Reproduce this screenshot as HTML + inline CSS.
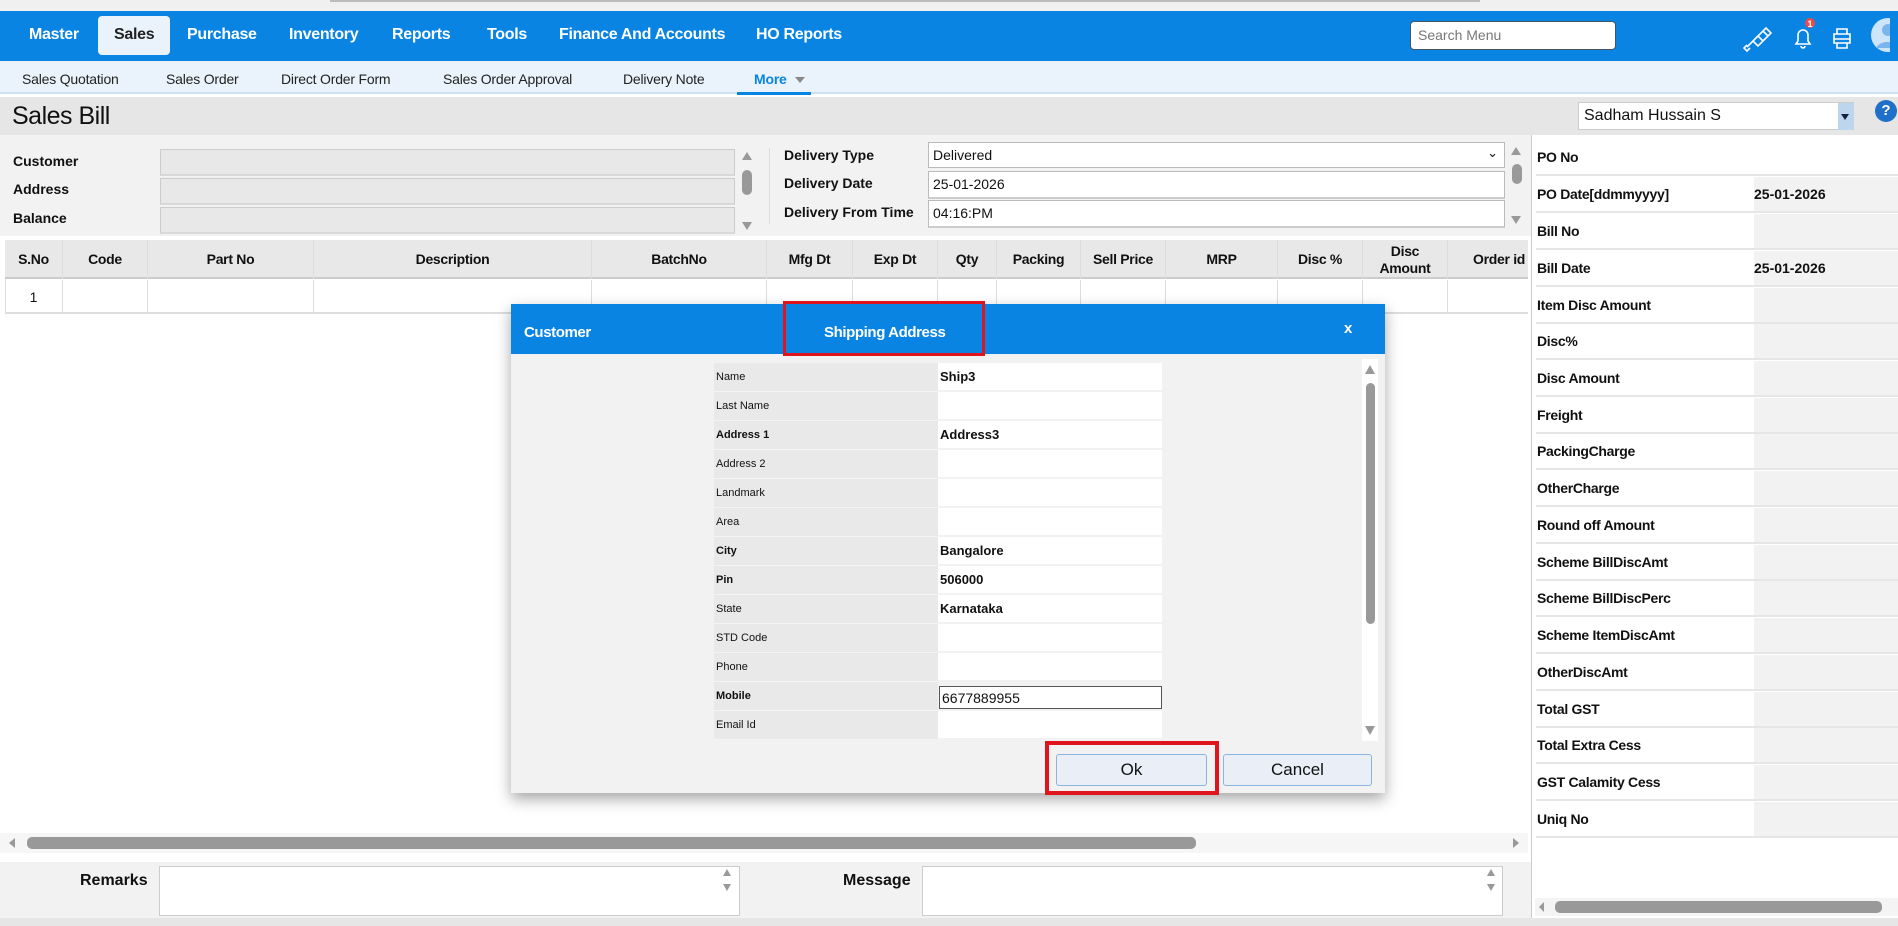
<!DOCTYPE html>
<html><head><meta charset="utf-8"><style>
*{box-sizing:border-box;margin:0;padding:0}
body{width:1898px;height:926px;position:relative;overflow:hidden;background:#fff;font-family:"Liberation Sans",sans-serif;color:#111}
.a{position:absolute}
.nav{font-weight:bold;font-size:16px;color:#fff;top:26px;letter-spacing:-0.3px}
.sub{font-size:14px;top:71px;color:#222;letter-spacing:-0.2px}
.lbl{font-weight:bold;font-size:14px}
.inp{background:#e8e8e8;border:1px solid #ccc;border-bottom:2px solid #d8d8d8}
.inw{background:#fff;border:1px solid #bbb;font-size:14px;padding:4px 4px}
.th{position:absolute;top:240px;height:39px;border-right:1px solid #ddd;font-weight:bold;font-size:14px;display:flex;align-items:center;justify-content:center;text-align:center;line-height:17px;letter-spacing:-0.3px}
.td{position:absolute;top:280px;height:34px;border-right:1px solid #ddd}
.rp{position:absolute;left:1536px;width:362px;height:36px;border-bottom:2px solid #e6e6e6;display:flex}
.rp .l{width:218px;background:#fff;font-weight:bold;font-size:14px;display:flex;align-items:center;padding-left:1px;letter-spacing:-0.3px}
.rp .v{flex:1;background:#f2f2f2;font-weight:bold;font-size:14px;display:flex;align-items:center;padding-left:0}
.dr{position:absolute;left:714px;width:448px;height:29px;display:flex}
.dr .l{width:224px;background:#e9e9e9;font-size:11px;display:flex;align-items:center;padding-left:2px;border-bottom:1px solid #f4f4f4}
.dr .v{flex:1;background:#fff;font-size:13px;font-weight:bold;display:flex;align-items:center;padding-left:2px;border-bottom:2px solid #f2f2f2}
.sb{background:#999;border-radius:5px}
.tri{width:0;height:0;border-left:5px solid transparent;border-right:5px solid transparent}
</style></head><body>
<div class="a" style="left:0;top:0;width:1898px;height:11px;background:#f0f0f0"></div>
<div class="a" style="left:330px;top:0;width:1150px;height:2px;background:#bbb"></div>
<div class="a" style="left:0;top:11px;width:1898px;height:50px;background:#0984e3"></div>
<div class="a" style="left:98px;top:16px;width:72px;height:39px;background:#eaf3fc;border-radius:4px"></div>
<div class="a nav" style="left:29px">Master</div>
<div class="a nav" style="left:114px;color:#222">Sales</div>
<div class="a nav" style="left:187px">Purchase</div>
<div class="a nav" style="left:289px">Inventory</div>
<div class="a nav" style="left:392px">Reports</div>
<div class="a nav" style="left:487px">Tools</div>
<div class="a nav" style="left:559px">Finance And Accounts</div>
<div class="a nav" style="left:756px">HO Reports</div>
<div class="a" style="left:1410px;top:21px;width:206px;height:29px;background:#fff;border:1px solid #456;border-radius:4px;font-size:14px;color:#777;padding:5px 7px">Search Menu</div>
<svg class="a" style="left:1740px;top:18px" width="150" height="36" viewBox="0 0 150 36">
<g fill="none" stroke="#fff" stroke-width="1.6"><path d="M7 29l6-6M10 30l-3 3-3-3 3-3M13 23l10-10 5 5-10 10zM23 13l3-3 5 5-3 3M18 18l5 5"/>
<path d="M56 26h14l-2-3v-6a5 5 0 0 0-10 0v6zM61 28a2 2 0 0 0 4 0"/>
<path d="M97 16v-5h10v5M94 16h16v9H94zM94 21h16M97 25v5h10v-5"/></g>
<circle cx="70" cy="5" r="5" fill="#ee4b4b"/><text x="70" y="9" font-size="9" fill="#fff" text-anchor="middle" font-family="Liberation Sans" font-weight="bold">1</text>
<circle cx="148" cy="17" r="17" fill="#cde5fa"/><circle cx="148" cy="12" r="6" fill="#7ab6ec"/><path d="M136 30a13 10 0 0 1 24 0z" fill="#7ab6ec"/>
</svg>
<div class="a" style="left:0;top:61px;width:1898px;height:33px;background:#eaf3fc;border-bottom:2px solid #cfe0f0"></div>
<div class="a sub" style="left:22px">Sales Quotation</div>
<div class="a sub" style="left:166px">Sales Order</div>
<div class="a sub" style="left:281px">Direct Order Form</div>
<div class="a sub" style="left:443px">Sales Order Approval</div>
<div class="a sub" style="left:623px">Delivery Note</div>
<div class="a sub" style="left:754px;color:#0984e3;font-weight:bold">More</div>
<div class="a tri" style="left:795px;top:77px;border-top:6px solid #888"></div>
<div class="a" style="left:737px;top:92px;width:74px;height:3px;background:#0984e3"></div>
<div class="a" style="left:0;top:97px;width:1898px;height:38px;background:#e6e6e6"></div>
<div class="a" style="left:12px;top:102px;font-size:25px;letter-spacing:-0.5px">Sales Bill</div>
<div class="a" style="left:1578px;top:102px;width:276px;height:28px;background:#fff;border:1px solid #ccc;font-size:16px;padding:4px 5px">Sadham Hussain S</div>
<div class="a" style="left:1838px;top:103px;width:16px;height:27px;background:#bcd6ee"></div>
<div class="a tri" style="left:1841px;top:114px;border-top:6px solid #124;border-left-width:4px;border-right-width:4px"></div>
<div class="a" style="left:1875px;top:100px;width:22px;height:22px;border-radius:50%;background:#1e70c8;color:#fff;font-weight:bold;font-size:15px;text-align:center;line-height:22px">?</div>
<div class="a" style="left:0;top:135px;width:1531px;height:101px;background:#f2f2f2"></div>
<div class="a lbl" style="left:13px;top:153px">Customer</div>
<div class="a lbl" style="left:13px;top:181px">Address</div>
<div class="a lbl" style="left:13px;top:210px">Balance</div>
<div class="a inp" style="left:160px;top:149px;width:575px;height:27px"></div>
<div class="a inp" style="left:160px;top:178px;width:575px;height:27px"></div>
<div class="a inp" style="left:160px;top:207px;width:575px;height:27px"></div>
<div class="a tri" style="left:742px;top:152px;border-bottom:8px solid #999"></div>
<div class="a sb" style="left:742px;top:170px;width:10px;height:25px"></div>
<div class="a tri" style="left:742px;top:222px;border-top:8px solid #999"></div>
<div class="a" style="left:769px;top:148px;width:1px;height:76px;background:#ddd"></div>
<div class="a lbl" style="left:784px;top:147px">Delivery Type</div>
<div class="a lbl" style="left:784px;top:175px">Delivery Date</div>
<div class="a lbl" style="left:784px;top:204px">Delivery From Time</div>
<div class="a inw" style="left:928px;top:142px;width:577px;height:26px">Delivered<span style="position:absolute;right:6px;top:2px;font-size:13px">&#8964;</span></div>
<div class="a inw" style="left:928px;top:171px;width:577px;height:28px;border-bottom:2px solid #ccc">25-01-2026</div>
<div class="a inw" style="left:928px;top:200px;width:577px;height:28px;border-bottom:2px solid #ccc">04:16:PM</div>
<div class="a tri" style="left:1511px;top:147px;border-bottom:8px solid #999"></div>
<div class="a sb" style="left:1512px;top:164px;width:10px;height:20px"></div>
<div class="a tri" style="left:1511px;top:216px;border-top:8px solid #999"></div>
<div class="a" style="left:5px;top:240px;width:1523px;height:39px;background:#e8e8e8;border-bottom:2px solid #ccc"></div>
<div class="th" style="left:5px;width:58px">S.No</div>
<div class="th" style="left:63px;width:85px">Code</div>
<div class="th" style="left:148px;width:166px">Part No</div>
<div class="th" style="left:314px;width:278px">Description</div>
<div class="th" style="left:592px;width:175px">BatchNo</div>
<div class="th" style="left:767px;width:86px">Mfg Dt</div>
<div class="th" style="left:853px;width:85px">Exp Dt</div>
<div class="th" style="left:938px;width:59px">Qty</div>
<div class="th" style="left:997px;width:84px">Packing</div>
<div class="th" style="left:1081px;width:85px">Sell Price</div>
<div class="th" style="left:1166px;width:112px">MRP</div>
<div class="th" style="left:1278px;width:85px">Disc %</div>
<div class="th" style="left:1363px;width:85px">Disc<br>Amount</div>
<div class="th" style="left:1448px;width:80px;justify-content:flex-start;padding-left:25px;border:0;overflow:hidden;white-space:nowrap">Order id</div>
<div class="a" style="left:5px;top:279px;width:1523px;height:35px;border-left:1px solid #ddd;border-bottom:2px solid #ddd"></div>
<div class="td" style="left:5px;width:58px;text-align:center;font-size:14px;line-height:34px">1</div>
<div class="td" style="left:63px;width:85px"></div><div class="td" style="left:148px;width:166px"></div><div class="td" style="left:314px;width:278px"></div><div class="td" style="left:592px;width:175px"></div><div class="td" style="left:767px;width:86px"></div><div class="td" style="left:853px;width:85px"></div><div class="td" style="left:938px;width:59px"></div><div class="td" style="left:997px;width:84px"></div><div class="td" style="left:1081px;width:85px"></div><div class="td" style="left:1166px;width:112px"></div><div class="td" style="left:1278px;width:85px"></div><div class="td" style="left:1363px;width:85px"></div>
<div class="a" style="left:1531px;top:135px;width:1px;height:791px;background:#ccc"></div>
<div class="rp" style="top:140px"><div class="l">PO No</div><div class="v" style="background:#fff"></div></div>
<div class="rp" style="top:177px"><div class="l">PO Date[ddmmyyyy]</div><div class="v">25-01-2026</div></div>
<div class="rp" style="top:214px"><div class="l">Bill No</div><div class="v"></div></div>
<div class="rp" style="top:251px"><div class="l">Bill Date</div><div class="v">25-01-2026</div></div>
<div class="rp" style="top:288px"><div class="l">Item Disc Amount</div><div class="v"></div></div>
<div class="rp" style="top:324px"><div class="l">Disc%</div><div class="v"></div></div>
<div class="rp" style="top:361px"><div class="l">Disc Amount</div><div class="v"></div></div>
<div class="rp" style="top:398px"><div class="l">Freight</div><div class="v"></div></div>
<div class="rp" style="top:434px"><div class="l">PackingCharge</div><div class="v"></div></div>
<div class="rp" style="top:471px"><div class="l">OtherCharge</div><div class="v"></div></div>
<div class="rp" style="top:508px"><div class="l">Round off Amount</div><div class="v"></div></div>
<div class="rp" style="top:545px"><div class="l">Scheme BillDiscAmt</div><div class="v"></div></div>
<div class="rp" style="top:581px"><div class="l">Scheme BillDiscPerc</div><div class="v"></div></div>
<div class="rp" style="top:618px"><div class="l">Scheme ItemDiscAmt</div><div class="v"></div></div>
<div class="rp" style="top:655px"><div class="l">OtherDiscAmt</div><div class="v"></div></div>
<div class="rp" style="top:692px"><div class="l">Total GST</div><div class="v"></div></div>
<div class="rp" style="top:728px"><div class="l">Total Extra Cess</div><div class="v"></div></div>
<div class="rp" style="top:765px"><div class="l">GST Calamity Cess</div><div class="v"></div></div>
<div class="rp" style="top:802px"><div class="l">Uniq No</div><div class="v"></div></div>
<div class="a" style="left:1535px;top:898px;width:363px;height:18px;background:#f4f4f4"></div>
<div class="a sb" style="left:1555px;top:901px;width:327px;height:12px"></div>
<div class="a" style="left:1539px;top:902px;width:0;height:0;border-top:5px solid transparent;border-bottom:5px solid transparent;border-right:5px solid #999"></div>
<div class="a" style="left:0;top:833px;width:1528px;height:20px;background:#f6f6f6"></div>
<div class="a sb" style="left:27px;top:837px;width:1169px;height:12px"></div>
<div class="a" style="left:9px;top:838px;width:0;height:0;border-top:5px solid transparent;border-bottom:5px solid transparent;border-right:6px solid #999"></div>
<div class="a" style="left:1513px;top:838px;width:0;height:0;border-top:5px solid transparent;border-bottom:5px solid transparent;border-left:6px solid #999"></div>
<div class="a" style="left:0;top:862px;width:1531px;height:56px;background:#f2f2f2"></div>
<div class="a lbl" style="left:80px;top:872px;font-size:16px">Remarks</div>
<div class="a" style="left:159px;top:866px;width:581px;height:50px;background:#fff;border:1px solid #ccc"></div>
<div class="a tri" style="left:723px;top:869px;border-bottom:7px solid #999;border-left-width:4px;border-right-width:4px"></div>
<div class="a tri" style="left:723px;top:884px;border-top:7px solid #999;border-left-width:4px;border-right-width:4px"></div>
<div class="a lbl" style="left:843px;top:872px;font-size:16px">Message</div>
<div class="a" style="left:922px;top:866px;width:581px;height:50px;background:#fff;border:1px solid #ccc"></div>
<div class="a tri" style="left:1487px;top:869px;border-bottom:7px solid #999;border-left-width:4px;border-right-width:4px"></div>
<div class="a tri" style="left:1487px;top:884px;border-top:7px solid #999;border-left-width:4px;border-right-width:4px"></div>
<div class="a" style="left:0;top:918px;width:1898px;height:8px;background:#e6e6e6"></div>
<div class="a" style="left:511px;top:304px;width:874px;height:489px;background:#f2f2f2;box-shadow:0 6px 14px rgba(0,0,0,.35)"></div>
<div class="a" style="left:511px;top:304px;width:874px;height:50px;background:#0984e3"></div>
<div class="a" style="left:524px;top:324px;color:#fff;font-weight:bold;font-size:15px;letter-spacing:-0.4px">Customer</div>
<div class="a" style="left:783px;top:301px;width:202px;height:55px;border:3px solid #e0141c"></div>
<div class="a" style="left:824px;top:324px;color:#fff;font-weight:bold;font-size:15px;letter-spacing:-0.4px">Shipping Address</div>
<div class="a" style="left:1344px;top:320px;color:#fff;font-weight:bold;font-size:15px">x</div>
<div class="dr" style="top:363px"><div class="l">Name</div><div class="v">Ship3</div></div>
<div class="dr" style="top:392px"><div class="l">Last Name</div><div class="v"></div></div>
<div class="dr" style="top:421px"><div class="l" style="font-weight:bold">Address 1</div><div class="v">Address3</div></div>
<div class="dr" style="top:450px"><div class="l">Address 2</div><div class="v"></div></div>
<div class="dr" style="top:479px"><div class="l">Landmark</div><div class="v"></div></div>
<div class="dr" style="top:508px"><div class="l">Area</div><div class="v"></div></div>
<div class="dr" style="top:537px"><div class="l" style="font-weight:bold">City</div><div class="v">Bangalore</div></div>
<div class="dr" style="top:566px"><div class="l" style="font-weight:bold">Pin</div><div class="v">506000</div></div>
<div class="dr" style="top:595px"><div class="l">State</div><div class="v">Karnataka</div></div>
<div class="dr" style="top:624px"><div class="l">STD Code</div><div class="v"></div></div>
<div class="dr" style="top:653px"><div class="l">Phone</div><div class="v"></div></div>
<div class="dr" style="top:682px"><div class="l" style="font-weight:bold">Mobile</div><div class="v" style="font-weight:normal;font-size:14px;border:1px solid #555;margin:4px 0 2px 1px">6677889955</div></div>
<div class="dr" style="top:711px"><div class="l">Email Id</div><div class="v"></div></div>
<div class="a" style="left:1362px;top:359px;width:16px;height:382px;background:#fff"></div>
<div class="a tri" style="left:1365px;top:365px;border-bottom:9px solid #999"></div>
<div class="a sb" style="left:1366px;top:383px;width:9px;height:241px"></div>
<div class="a tri" style="left:1365px;top:726px;border-top:9px solid #999"></div>
<div class="a" style="left:1045px;top:741px;width:174px;height:54px;border:4px solid #e0141c"></div>
<div class="a" style="left:1056px;top:754px;width:151px;height:32px;background:#e9eef7;border:1px solid #8ab4e0;border-radius:3px;text-align:center;font-size:17px;line-height:30px">Ok</div>
<div class="a" style="left:1223px;top:754px;width:149px;height:32px;background:#e9eef7;border:1px solid #8ab4e0;border-radius:3px;text-align:center;font-size:17px;line-height:30px">Cancel</div>
</body></html>
